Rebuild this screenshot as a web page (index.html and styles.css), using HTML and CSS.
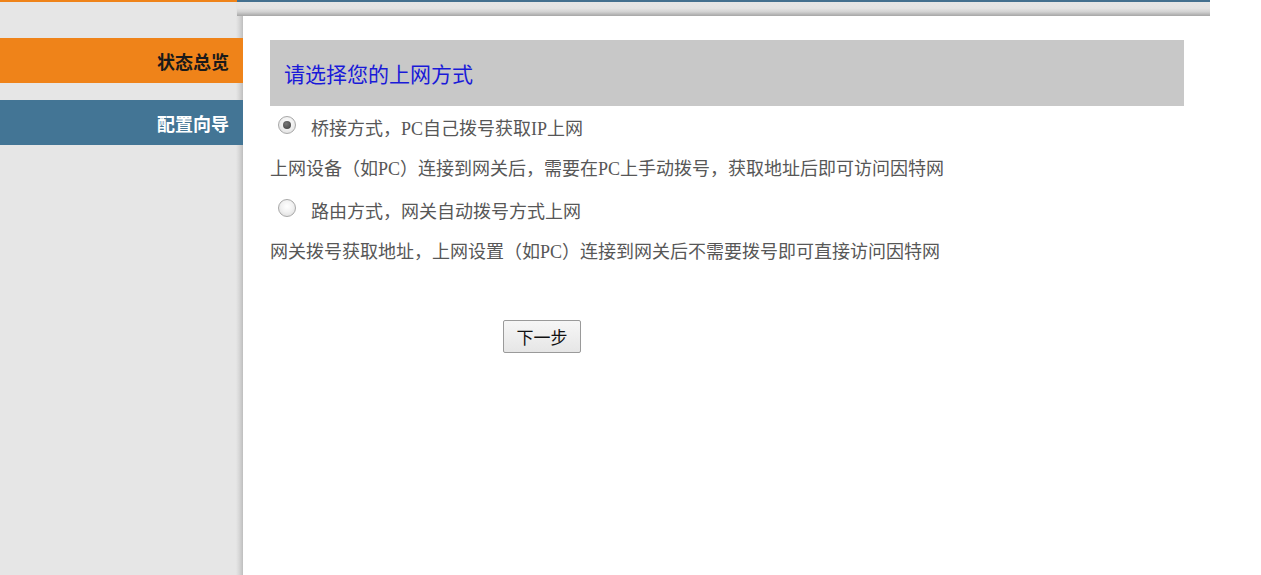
FILE: index.html
```html
<!DOCTYPE html>
<html lang="zh-CN">
<head>
<meta charset="utf-8">
<title>配置向导</title>
<link rel="stylesheet" href="styles.css">
</head>
<body>
<div class="page">
  <aside class="sidebar">
    <nav class="menu">
      <a class="menu-item menu-status" href="#">状态总览</a>
      <a class="menu-item menu-wizard" href="#">配置向导</a>
    </nav>
  </aside>
  <main class="main">
    <div class="topbar"></div>
    <div class="content">
      <div class="panel-title">请选择您的上网方式</div>
      <label class="option">
        <input class="radio" type="radio" name="mode" checked>
        <span class="option-text">桥接方式，PC自己拨号获取IP上网</span>
      </label>
      <p class="desc">上网设备（如PC）连接到网关后，需要在PC上手动拨号，获取地址后即可访问因特网</p>
      <label class="option option-second">
        <input class="radio" type="radio" name="mode">
        <span class="option-text">路由方式，网关自动拨号方式上网</span>
      </label>
      <p class="desc">网关拨号获取地址，上网设置（如PC）连接到网关后不需要拨号即可直接访问因特网</p>
      <div class="actions">
        <button class="btn" type="button">下一步</button>
      </div>
    </div>
  </main>
</div>
</body>
</html>
```

FILE: styles.css
```css
html, body {
  margin: 0;
  padding: 0;
  background: #ffffff;
}

.page {
  display: grid;
  grid-template-columns: 243px 967px;
  height: 575px;
  overflow: hidden;
}

.sidebar {
  border-top: 2px solid #ef8319;
  background: linear-gradient(to right, #e6e6e6 0, #e6e6e6 236px, #d8d8d8 239px, #c6c6c6 242px, #bdbdbd 243px);
}

.menu {
  display: flex;
  flex-direction: column;
  gap: 17px;
  margin-top: 36px;
}

.menu-item {
  display: flex;
  align-items: center;
  justify-content: flex-end;
  height: 45px;
  padding-right: 14px;
  font-family: "Noto Sans CJK SC", "Liberation Sans", sans-serif;
  font-size: 18px;
  font-weight: bold;
  text-decoration: none;
}

.menu-status {
  background: #ef8319;
  color: #1a1a1a;
}

.menu-wizard {
  background: #437595;
  color: #ffffff;
}

.main {
  display: flex;
  flex-direction: column;
}

.topbar {
  height: 14px;
  border-top: 2px solid #44708f;
  margin-left: -6px;
  background: linear-gradient(#e6e6e6 0%, #e3e3e3 45%, #d2d2d2 70%, #b4b4b4 90%, #a6a6a6 100%);
}

.content {
  padding: 24px 26px 0 27px;
  font-family: "Liberation Serif", "Noto Sans CJK SC", serif;
  color: #575757;
  font-size: 18px;
}

.panel-title {
  display: flex;
  align-items: center;
  height: 66px;
  padding-left: 14px;
  background: #c8c8c8;
  color: #1a1ad8;
  font-size: 21px;
}

.option {
  display: flex;
  align-items: center;
  height: 42px;
  padding-left: 8px;
  margin-top: 2px;
}

.option-second {
  margin-top: 5px;
}

.radio {
  -webkit-appearance: none;
  appearance: none;
  width: 18px;
  height: 18px;
  margin: 0 15px 9px 0;
  border-radius: 50%;
  border: 1px solid #a8a8a8;
  background: radial-gradient(circle at 50% 40%, #ffffff 0, #f2f2f2 45%, #d8d8d8 100%);
  box-sizing: border-box;
  display: grid;
  place-items: center;
}

.radio:checked::after {
  content: "";
  width: 8px;
  height: 8px;
  border-radius: 50%;
  background: radial-gradient(circle at 40% 35%, #7a7a7a, #3c3c3c);
}

.option-text {
  line-height: 1;
}

.desc {
  margin: 0;
  height: 38px;
  display: flex;
  align-items: center;
  margin-top: -2px;
}

.actions {
  margin-top: 51px;
  padding-left: 233px;
}

.btn {
  width: 78px;
  height: 33px;
  padding: 0;
  border: 1px solid #9a9a9a;
  border-radius: 2px;
  background: linear-gradient(#f6f6f6, #e6e6e6);
  color: #111111;
  font-family: "Noto Sans CJK SC", "Liberation Sans", sans-serif;
  font-size: 17px;
}
```
